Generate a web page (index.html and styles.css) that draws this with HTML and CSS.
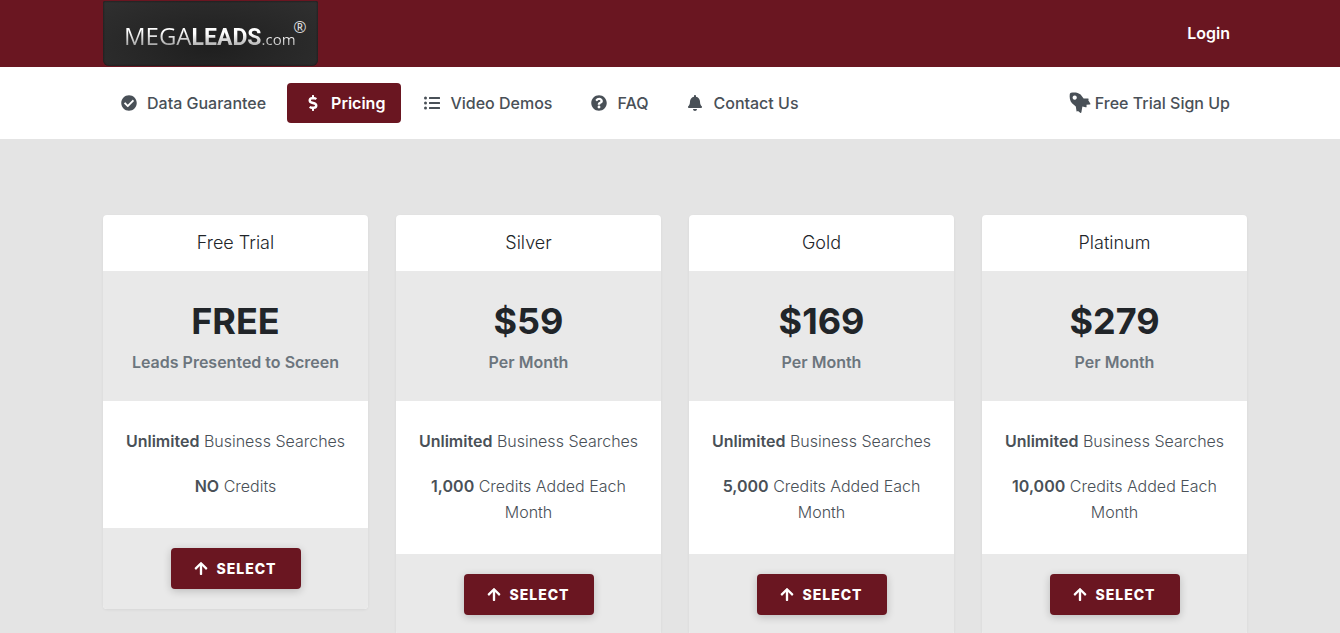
FILE: index.html
```html
<!DOCTYPE html>
<html lang="en">
<head>
<meta charset="utf-8">
<meta name="viewport" content="width=device-width, initial-scale=1">
<title>MegaLeads.com Pricing</title>
<link rel="stylesheet" href="styles.css">
</head>
<body>
<svg class="sprite" aria-hidden="true">
  <symbol id="arrow-up" viewBox="0 0 448 512"><path d="M34.900 289.500l-22.200-22.200c-9.400-9.400-9.400-24.600 0-33.900L207 39c9.400-9.400 24.600-9.400 33.900 0l194.300 194.300c9.400 9.400 9.400 24.600 0 33.900L413 289.400c-9.500 9.500-25 9.300-34.300-.4L264 168.600V456c0 13.300-10.700 24-24 24h-32c-13.300 0-24-10.700-24-24V168.600L69.200 289.100c-9.300 9.800-24.800 10-34.300.4z"/></symbol>
</svg>
<header class="topbar">
  <div class="container topbar-row">
    <a class="logo" href="#" aria-label="MegaLeads.com"><span class="logo-mega">MEGA</span><span class="logo-leads">LEADS</span><span class="logo-com">.com</span><span class="logo-mark">®</span></a>
    <a class="login" href="#">Login</a>
  </div>
</header>
<nav class="nav">
  <div class="container nav-row">
    <ul class="menu">
      <li><a class="item" href="#"><svg class="icon" viewBox="0 0 512 512"><path d="M504 256c0 136.967-111.033 248-248 248S8 392.967 8 256 119.033 8 256 8s248 111.033 248 248zM227.314 387.314l184-184c6.248-6.248 6.248-16.379 0-22.627l-22.627-22.627c-6.248-6.249-16.379-6.249-22.628 0L216 308.118l-70.059-70.059c-6.248-6.248-16.379-6.248-22.628 0l-22.627 22.627c-6.248 6.248-6.248 16.379 0 22.627l104 104c6.249 6.249 16.379 6.249 22.628.001z"/></svg>Data Guarantee</a></li>
      <li><a class="item active" href="#"><svg class="icon" viewBox="0 0 288 512"><path d="M209.200 233.400l-108-31.600C88.700 198.200 80 186.500 80 173.500c0-16.300 13.200-29.500 29.500-29.500h66.300c12.200 0 24.200 3.700 34.200 10.500 6.100 4.100 14.300 3.100 19.500-2l34.800-34c7.100-6.900 6.100-18.400-1.800-24.500C238 74.800 207.400 64.100 176 64V16c0-8.800-7.200-16-16-16h-32c-8.800 0-16 7.200-16 16v48h-2.500C45.800 64-5.400 118.700.5 183.600c4.200 46.100 39.400 83.600 83.800 96.600l102.500 30c12.500 3.700 21.200 15.300 21.200 28.300 0 16.300-13.200 29.500-29.500 29.500h-66.300C100 368 88 364.300 78 357.500c-6.100-4.100-14.300-3.100-19.500 2l-34.800 34c-7.100 6.900-6.100 18.400 1.800 24.500 24.500 19.200 55.100 29.900 86.500 30v48c0 8.800 7.200 16 16 16h32c8.800 0 16-7.200 16-16v-48.200c46.600-.9 90.300-28.600 105.700-72.700 21.500-61.600-14.600-124.800-72.500-141.700z"/></svg>Pricing</a></li>
      <li><a class="item" href="#"><svg class="icon" viewBox="0 0 512 512"><path d="M48 48a48 48 0 1 0 48 48 48 48 0 0 0-48-48zm0 160a48 48 0 1 0 48 48 48 48 0 0 0-48-48zm0 160a48 48 0 1 0 48 48 48 48 0 0 0-48-48zm448 16H176a16 16 0 0 0-16 16v32a16 16 0 0 0 16 16h320a16 16 0 0 0 16-16v-32a16 16 0 0 0-16-16zm0-320H176a16 16 0 0 0-16 16v32a16 16 0 0 0 16 16h320a16 16 0 0 0 16-16V80a16 16 0 0 0-16-16zm0 160H176a16 16 0 0 0-16 16v32a16 16 0 0 0 16 16h320a16 16 0 0 0 16-16v-32a16 16 0 0 0-16-16z"/></svg>Video Demos</a></li>
      <li><a class="item" href="#"><svg class="icon" viewBox="0 0 512 512"><path d="M504 256c0 136.997-111.043 248-248 248S8 392.997 8 256C8 119.083 119.043 8 256 8s248 111.083 248 248zM262.655 90c-54.497 0-89.255 22.957-116.549 63.758-3.536 5.286-2.353 12.415 2.715 16.258l34.699 26.310c5.205 3.947 12.621 3.008 16.665-2.122 17.864-22.658 30.113-35.797 57.303-35.797 20.429 0 45.698 13.148 45.698 32.958 0 14.976-12.363 22.667-32.534 33.976C247.128 238.528 216 254.941 216 296v4c0 6.627 5.373 12 12 12h56c6.627 0 12-5.373 12-12v-1.333c0-28.462 83.186-29.647 83.186-106.667 0-58.002-60.165-102-116.531-102zM256 338c-25.365 0-46 20.635-46 46 0 25.364 20.635 46 46 46s46-20.636 46-46c0-25.365-20.635-46-46-46z"/></svg>FAQ</a></li>
      <li><a class="item" href="#"><svg class="icon" viewBox="0 0 448 512"><path d="M224 512c35.320 0 63.970-28.650 63.970-64H160.030c0 35.350 28.650 64 63.970 64zm215.390-149.710c-19.320-20.760-55.470-51.990-55.470-154.290 0-77.700-54.480-139.900-127.940-155.160V32c0-17.670-14.320-32-31.980-32s-31.980 14.330-31.980 32v20.840C118.560 68.100 64.080 130.300 64.080 208c0 102.300-36.150 133.530-55.470 154.290-6 6.450-8.660 14.160-8.610 21.710.11 16.400 12.980 32 32.100 32h383.800c19.120 0 32-15.600 32.100-32 .05-7.550-2.610-15.270-8.610-21.710z"/></svg>Contact Us</a></li>
    </ul>
    <a class="signup" href="#"><svg class="rocket" viewBox="0 0 22 22"><path fill-rule="evenodd" d="M2 .8C5 .2 9 .2 11.600 2.600L14.600 6.500 19 6.600C20 6.700 19.700 7.600 19.300 8.200L21.300 11.500C21.700 12.100 21.300 12.500 20.600 12.500L17.500 12.700 17.600 14.800C17.600 15.400 17.100 15.500 16.600 15.200L13.400 14.400 12.400 20.300C12.200 21.100 11.800 21.300 11.200 20.800L9 19C8.400 19.500 7.600 19.800 7.500 19L6.800 14.500 3 11.300C.7 8.700.4 5 .8 2Q1 1 2 .8zM5.700 3.500a2.100 2.100 0 1 0 .01 0z"/></svg>Free Trial Sign Up</a>
  </div>
</nav>
<main class="container plans">
  <section class="card">
    <h2 class="plan-name">Free Trial</h2>
    <div class="price-box"><p class="price">FREE</p><p class="term">Leads Presented to Screen</p></div>
    <div class="features"><p><b>Unlimited</b> Business Searches</p><p><b>NO</b> Credits</p></div>
    <div class="action"><button class="select" type="button"><svg class="arrow"><use href="#arrow-up"/></svg>SELECT</button></div>
  </section>
  <section class="card">
    <h2 class="plan-name">Silver</h2>
    <div class="price-box"><p class="price">$59</p><p class="term">Per Month</p></div>
    <div class="features"><p><b>Unlimited</b> Business Searches</p><p><b>1,000</b> Credits Added Each Month</p></div>
    <div class="action"><button class="select" type="button"><svg class="arrow"><use href="#arrow-up"/></svg>SELECT</button></div>
  </section>
  <section class="card">
    <h2 class="plan-name">Gold</h2>
    <div class="price-box"><p class="price">$169</p><p class="term">Per Month</p></div>
    <div class="features"><p><b>Unlimited</b> Business Searches</p><p><b>5,000</b> Credits Added Each Month</p></div>
    <div class="action"><button class="select" type="button"><svg class="arrow"><use href="#arrow-up"/></svg>SELECT</button></div>
  </section>
  <section class="card">
    <h2 class="plan-name">Platinum</h2>
    <div class="price-box"><p class="price">$279</p><p class="term">Per Month</p></div>
    <div class="features"><p><b>Unlimited</b> Business Searches</p><p><b>10,000</b> Credits Added Each Month</p></div>
    <div class="action"><button class="select" type="button"><svg class="arrow"><use href="#arrow-up"/></svg>SELECT</button></div>
  </section>
</main>
</body>
</html>
```
FILE: styles.css
```css
* {
  box-sizing: border-box;
}

body {
  margin: 0;
  background: #e4e4e4;
  color: #495057;
  font: 400 16px/26px Inter, "Liberation Sans", sans-serif;
}

p,
h2,
ul {
  margin: 0;
  padding: 0;
}

a {
  color: inherit;
  text-decoration: none;
}

.sprite {
  display: none;
}

/* The gutter is 10px wider on the left than on the right. */
.container {
  max-width: 1210px;
  margin: 0 auto;
  padding: 0 28px 0 38px;
}

.topbar {
  background: #6a1621;
}

.topbar-row,
.nav-row {
  display: flex;
  align-items: center;
  justify-content: space-between;
}

.logo {
  position: relative;
  display: flex;
  align-items: baseline;
  height: 65px;
  margin: 1px 0;
  padding: 13px 22px 0 21px;
  border-radius: 2px 2px 6px 6px;
  background: radial-gradient(ellipse at 50% 70%, #1f1f1f, #303030);
  box-shadow: inset 0 0 2px #111;
  font-family: "Open Sans", "Noto Sans", sans-serif;
  font-size: 24px;
  line-height: 44px;
}

.logo-mega,
.logo-leads,
.logo-com {
  background: linear-gradient(#fff 40%, #aaa 70%);
  background-clip: text;
  -webkit-background-clip: text;
  color: transparent;
}

.logo-mega {
  font-weight: 400;
}

.logo-leads {
  font-family: Roboto, "Open Sans", sans-serif;
  font-size: 23px;
  font-weight: 700;
}

.logo-com {
  font-size: 15px;
  font-weight: 400;
}

/* Registered mark sits over the end of the wordmark. */
.logo-mark {
  position: absolute;
  top: 14px;
  right: 11px;
  color: #ddd;
  font-size: 16px;
  line-height: 24px;
}

.login {
  padding: 0 17px 2px;
  color: #fff;
  font-weight: 600;
}

.nav {
  background: #fff;
  font-weight: 500;
}

.nav-row {
  min-height: 72px;
}

.menu {
  display: flex;
  gap: 5px;
  list-style: none;
}

.item {
  display: flex;
  align-items: center;
  gap: 8px;
  height: 40px;
  padding: 0 16px;
  border-radius: 4px;
}

.item.active {
  background: #6a1621;
  color: #fff;
  font-weight: 600;
}

.icon {
  width: 20px;
  height: 16px;
  fill: currentColor;
}

.signup {
  display: flex;
  align-items: center;
  gap: 4px;
  padding: 0 17px;
}

.rocket {
  width: 22px;
  height: 22px;
  fill: currentColor;
}

.plans {
  display: grid;
  grid-template-columns: repeat(4, 1fr);
  align-items: start;
  gap: 28px;
  padding-top: 76px;
  padding-bottom: 76px;
  text-align: center;
}

.card {
  overflow: hidden;
  border-radius: 4px;
  background: #fff;
  box-shadow: 0 1px 3px rgba(0, 0, 0, 0.06);
}

.plan-name {
  padding: 15px 20px;
  color: #212529;
  font-size: 18px;
  font-weight: 300;
}

.price-box {
  padding: 28px 20px 26px;
  background: #e9e9e9;
}

.price {
  color: #212529;
  font-size: 36px;
  font-weight: 700;
  line-height: 44px;
}

.term {
  padding-top: 6px;
  color: #6c757d;
  font-weight: 600;
}

.features {
  display: grid;
  gap: 19px;
  padding: 27px 20px 29px;
  font-weight: 300;
}

.features b {
  font-weight: 600;
}

.action {
  padding: 20px;
  background: #e9e9e9;
}

.select {
  display: inline-flex;
  align-items: center;
  justify-content: center;
  gap: 8px;
  width: 130px;
  height: 41px;
  padding: 0;
  border: 0;
  border-radius: 4px;
  background: #6a1621;
  box-shadow: 0 2px 8px rgba(0, 0, 0, 0.2);
  color: #fff;
  font: 800 14px/20px Inter, "Liberation Sans", sans-serif;
  letter-spacing: 1px;
  vertical-align: top;
}

.arrow {
  width: 14px;
  height: 15px;
  fill: currentColor;
}
```
